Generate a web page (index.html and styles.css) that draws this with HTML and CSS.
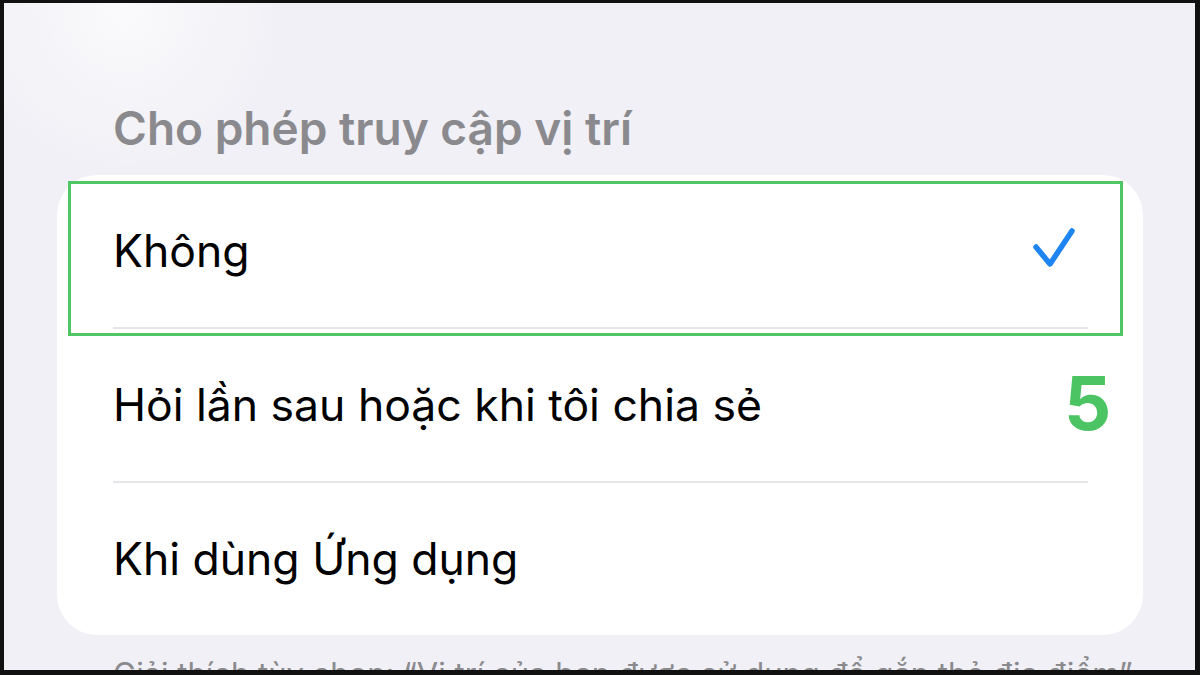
FILE: index.html
```html
<!DOCTYPE html>
<html lang="vi">
<head>
    <meta charset="UTF-8">
    <meta name="viewport" content="width=device-width, initial-scale=1.0">
    <title>Cho phép truy cập vị trí</title>
    <link rel="stylesheet" href="styles.css">
</head>
<body>
    <div class="screen">
        <h2 class="group-title">Cho phép truy cập vị trí</h2>

        <div class="card">
            <div class="row">
                <span>Không</span>
                <svg class="check" width="44" height="44" viewBox="0 0 44 44">
                    <polyline points="4,20 18,37 40,4" fill="none" stroke="#1d84f2" stroke-width="5.5" stroke-linecap="round" stroke-linejoin="round"/>
                </svg>
            </div>
            <div class="row">
                <span>Hỏi lần sau hoặc khi tôi chia sẻ</span>
            </div>
            <div class="row last">
                <span>Khi dùng Ứng dụng</span>
            </div>

            <!-- highlight overlay -->
            <div class="highlight"></div>
            <div class="step">5</div>
        </div>

        <p class="footnote">Giải thích tùy chọn: “Vị trí của bạn được sử dụng để gắn thẻ địa điểm”</p>
    </div>
</body>
</html>
```

FILE: styles.css
```css
/* Frame */
body {
    margin: 0;
    background: #111;
    font-family: 'Inter', 'Noto Sans', sans-serif;
}

.screen {
    margin: 3px 5px 0 4px;
    height: 667px;
    overflow: hidden;
    background: radial-gradient(circle at 120px 10px, rgba(255, 255, 255, 0.7), rgba(255, 255, 255, 0) 160px), #f0f0f6;
}

.group-title {
    margin: 0;
    padding: 98px 0 0 109px;
    font-size: 46px;
    line-height: 54px;
    font-weight: 600;
    color: #8a8a8e;
}

/* List card */
.card {
    position: relative;
    margin: 20px 0 0 53px;
    width: 1086px;
    background: #fff;
    border-radius: 40px;
}

.row {
    display: flex;
    justify-content: space-between;
    align-items: center;
    height: 152px;
    margin-left: 56px;
    margin-right: 55px;
    padding-right: 12px;
    border-bottom: 2px solid #e5e5ea;
    font-size: 44.5px;
    color: #000;
}

.row.last {
    border-bottom: none;
}

.check {
    margin-top: -4px;
}

.highlight {
    position: absolute;
    left: 11px;
    top: 6px;
    width: 1049px;
    height: 149px;
    border: 3px solid #4fc764;
}

.step {
    position: absolute;
    left: 1007px;
    top: 184px;
    font-size: 74px;
    line-height: 88px;
    font-weight: 700;
    color: #4cc463;
}

.footnote {
    margin: 20px 0 0 109px;
    font-size: 31px;
    color: #8a8a8e;
}
```
